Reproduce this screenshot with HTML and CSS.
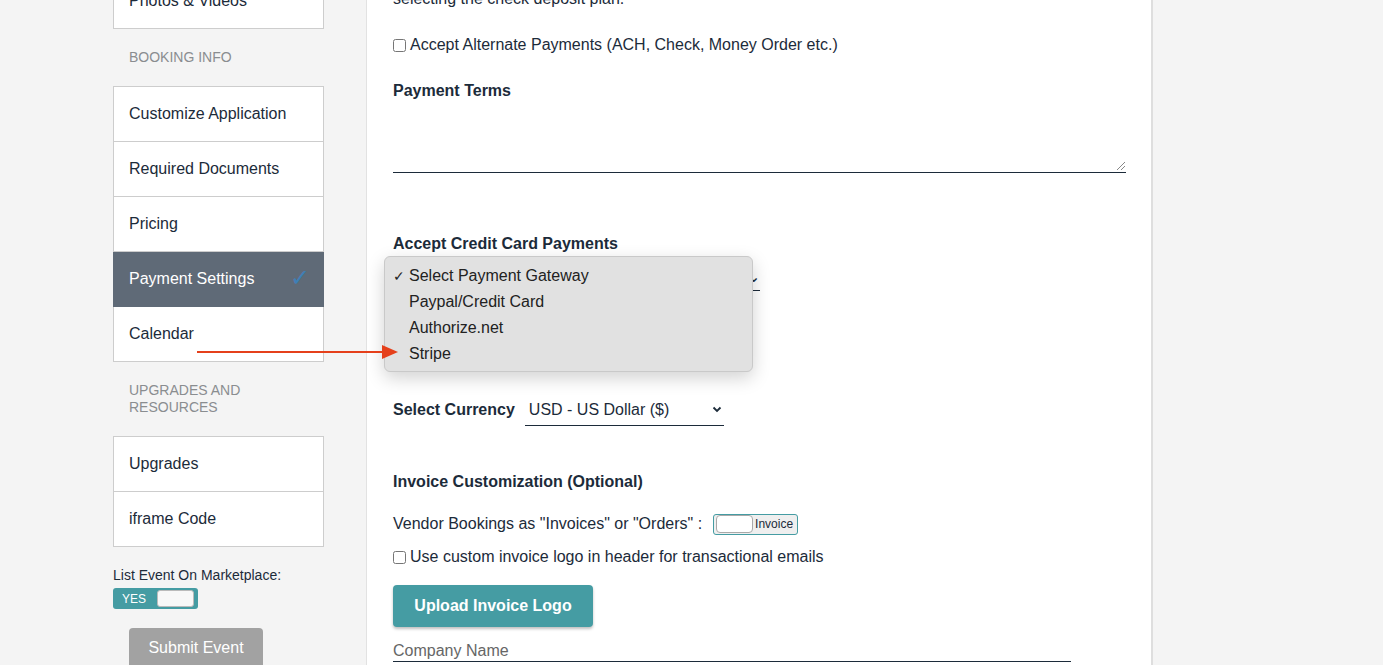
FILE: index.html
```html
<!DOCTYPE html>
<html>
  <head>
    <title>Payment Settings</title>
    <link rel="stylesheet" href="styles.css">
  </head>
  <body>
    <div class="page">
      <div class="sidebar">
        <div class="nav-item">Photos &amp; Videos</div>
        <div class="nav-label">BOOKING INFO</div>
        <div class="nav-group">
          <div class="nav-item">Customize Application</div>
          <div class="nav-item">Required Documents</div>
          <div class="nav-item">Pricing</div>
          <div class="nav-item active">Payment Settings <span class="check">&#10003;</span></div>
          <div class="nav-item">Calendar</div>
        </div>
        <div class="nav-label">UPGRADES AND<br>RESOURCES</div>
        <div class="nav-group">
          <div class="nav-item">Upgrades</div>
          <div class="nav-item">iframe Code</div>
        </div>
        <div class="market-label">List Event On Marketplace:</div>
        <div class="yes-toggle"><span>YES</span><span class="knob"></span></div>
        <button class="submit-btn">Submit Event</button>
      </div>

      <div class="panel">
        <p class="note">selecting the check deposit plan.</p>
        <label class="check-row alt-pay"><input type="checkbox"> Accept Alternate Payments (ACH, Check, Money Order etc.)</label>
        <h3 class="terms-title">Payment Terms</h3>
        <div class="terms-box"><span class="grip"></span></div>
        <h3 class="cc-title">Accept Credit Card Payments</h3>
        <div class="gateway-select">
          <span>Select Payment Gateway</span>
          <span class="chev">&#8964;</span>
        </div>
        <h3 class="hidden-title">Gateway Supported Currencies</h3>
        <div class="currency-row">
          <span class="strong">Select Currency</span>
          <div class="currency-select">
            <span>USD - US Dollar ($)</span>
            <svg width="10" height="7" viewBox="0 0 10 7"><path d="M1.5 1.5 L5 5 L8.5 1.5" fill="none" stroke="#1c2b3a" stroke-width="1.8"/></svg>
          </div>
        </div>
        <h3 class="invoice-title">Invoice Customization (Optional)</h3>
        <div class="vendor-row">
          Vendor Bookings as "Invoices" or "Orders" :
          <span class="inv-toggle"><span class="inv-knob"></span>Invoice</span>
        </div>
        <label class="check-row logo-row"><input type="checkbox"> Use custom invoice logo in header for transactional emails</label>
        <button class="upload-btn">Upload Invoice Logo</button>
        <div class="company-input">Company Name</div>
      </div>
    </div>

    <div class="dropdown">
      <div class="opt"><span class="tick">&#10003;</span>Select Payment Gateway</div>
      <div class="opt">Paypal/Credit Card</div>
      <div class="opt">Authorize.net</div>
      <div class="opt">Stripe</div>
    </div>

    <svg class="arrow" width="205" height="16" viewBox="0 0 205 16">
      <line x1="0" y1="8" x2="188" y2="8" stroke="#e5401b" stroke-width="2"/>
      <polygon points="185,1 201,8 185,15" fill="#e5401b"/>
    </svg>
  </body>
</html>
```

FILE: styles.css
```css
body {
  margin: 0;
  background: #f4f4f4;
  font-family: "Liberation Sans", Arial, sans-serif;
  color: #1c2b3a;
  overflow: hidden;
  height: 665px;
}
.page {
  display: flex;
  align-items: flex-start;
  margin-top: -27px;
}
.sidebar {
  width: 211px;
  margin-left: 113px;
  display: flex;
  flex-direction: column;
}
.nav-item {
  height: 54px;
  line-height: 54px;
  padding-left: 15px;
  background: #fff;
  border: 1px solid #cdcdcd;
  font-size: 16px;
  position: relative;
}
.nav-group .nav-item + .nav-item {
  border-top: none;
}
.nav-item.active {
  background: #5f6a77;
  color: #fff;
  border-color: #5f6a77;
}
.check {
  position: absolute;
  right: 13px;
  top: -1px;
  color: #3f7fb5;
  font-size: 24px;
}
.nav-label {
  padding: 20px 16px 20px;
  font-size: 14px;
  line-height: 17px;
  color: #8a8d90;
}
.market-label {
  margin-top: 20px;
  font-size: 14px;
  line-height: 16px;
}
.yes-toggle {
  margin-top: 5px;
  width: 85px;
  height: 21px;
  background: #459ca3;
  border-radius: 3px;
  color: #fff;
  font-size: 12px;
  display: flex;
  align-items: center;
  padding-left: 9px;
  box-sizing: border-box;
}
.yes-toggle .knob {
  margin-left: 11px;
  width: 35px;
  height: 15px;
  background: #f8f8f8;
  border: 1px solid #bbb;
  border-radius: 3px;
}
.submit-btn {
  margin: 19px 0 0 16px;
  width: 134px;
  height: 40px;
  background: #a2a2a2;
  color: #fff;
  border: none;
  border-radius: 4px;
  font-family: inherit;
  font-size: 16px;
}
.panel {
  margin-left: 42px;
  width: 758px;
  height: 720px;
  padding: 0 0 0 26px;
  background: #fff;
  border-left: 1px solid #e2e2e2;
  border-right: 2px solid #dedede;
  font-size: 16px;
}
.panel h3 {
  margin: 0;
  font-size: 16px;
  line-height: 20px;
}
.note {
  margin: 16px 0 0;
  line-height: 20px;
}
.check-row {
  display: flex;
  align-items: center;
  line-height: 20px;
}
.check-row input {
  margin: 0 4px 0 0;
  width: 13px;
  height: 13px;
}
.alt-pay {
  margin-top: 26px;
}
.terms-title {
  margin-top: 26px !important;
}
.terms-box {
  margin-top: 10px;
  width: 733px;
  height: 61px;
  border-bottom: 1px solid #1c2b3a;
  position: relative;
}
.grip {
  position: absolute;
  right: 1px;
  bottom: 2px;
  width: 8px;
  height: 8px;
  background: linear-gradient(135deg, transparent 45%, #888 45%, #888 55%, transparent 55%, transparent 70%, #888 70%, #888 80%, transparent 80%);
}
.cc-title {
  margin-top: 61px !important;
}
.gateway-select {
  margin-top: 9px;
  width: 367px;
  height: 27px;
  border-bottom: 1px solid #1c2b3a;
  display: flex;
  justify-content: space-between;
  align-items: center;
}
.hidden-title {
  margin-top: 62px !important;
}
.currency-row {
  margin-top: 21px;
  display: flex;
  align-items: center;
  height: 32px;
}
.strong {
  font-weight: bold;
}
.currency-select {
  margin-left: 10px;
  width: 199px;
  height: 31px;
  border-bottom: 1px solid #1c2b3a;
  display: flex;
  justify-content: space-between;
  align-items: center;
  padding: 0 2px 0 4px;
  box-sizing: border-box;
  font-size: 16px;
}
.invoice-title {
  margin-top: 46px !important;
}
.vendor-row {
  margin-top: 21px;
  display: flex;
  align-items: center;
  height: 22px;
}
.inv-toggle {
  margin-left: 11px;
  width: 85px;
  height: 21px;
  box-sizing: border-box;
  border: 1px solid #459ca3;
  border-radius: 3px;
  background: #efefef;
  font-size: 12px;
  display: flex;
  align-items: center;
  padding-left: 2px;
}
.inv-knob {
  width: 35px;
  height: 16px;
  background: #fff;
  border: 1px solid #a9a9a9;
  border-radius: 4px;
  margin-right: 2px;
}
.logo-row {
  margin-top: 12px;
}
.upload-btn {
  display: block;
  margin-top: 18px;
  width: 200px;
  height: 42px;
  background: #459ca3;
  color: #fff;
  border: none;
  border-radius: 4px;
  font-family: inherit;
  font-size: 16px;
  font-weight: bold;
  box-shadow: 0 2px 3px rgba(0, 0, 0, 0.25);
}
.company-input {
  margin-top: 14px;
  width: 678px;
  height: 20px;
  line-height: 20px;
  color: #666;
  border-bottom: 1px solid #1c2b3a;
}
.dropdown {
  position: absolute;
  left: 384px;
  top: 256px;
  width: 369px;
  height: 116px;
  padding-top: 6px;
  box-sizing: border-box;
  background: #e1e1e1;
  border: 1px solid #c9c9c9;
  border-radius: 6px;
  box-shadow: 0 6px 18px rgba(0, 0, 0, 0.18);
  color: #222;
  font-size: 16px;
}
.opt {
  height: 26px;
  line-height: 26px;
  padding-left: 24px;
  position: relative;
}
.tick {
  position: absolute;
  left: 8px;
  font-size: 14px;
}
.arrow {
  position: absolute;
  left: 197px;
  top: 344px;
}
```
